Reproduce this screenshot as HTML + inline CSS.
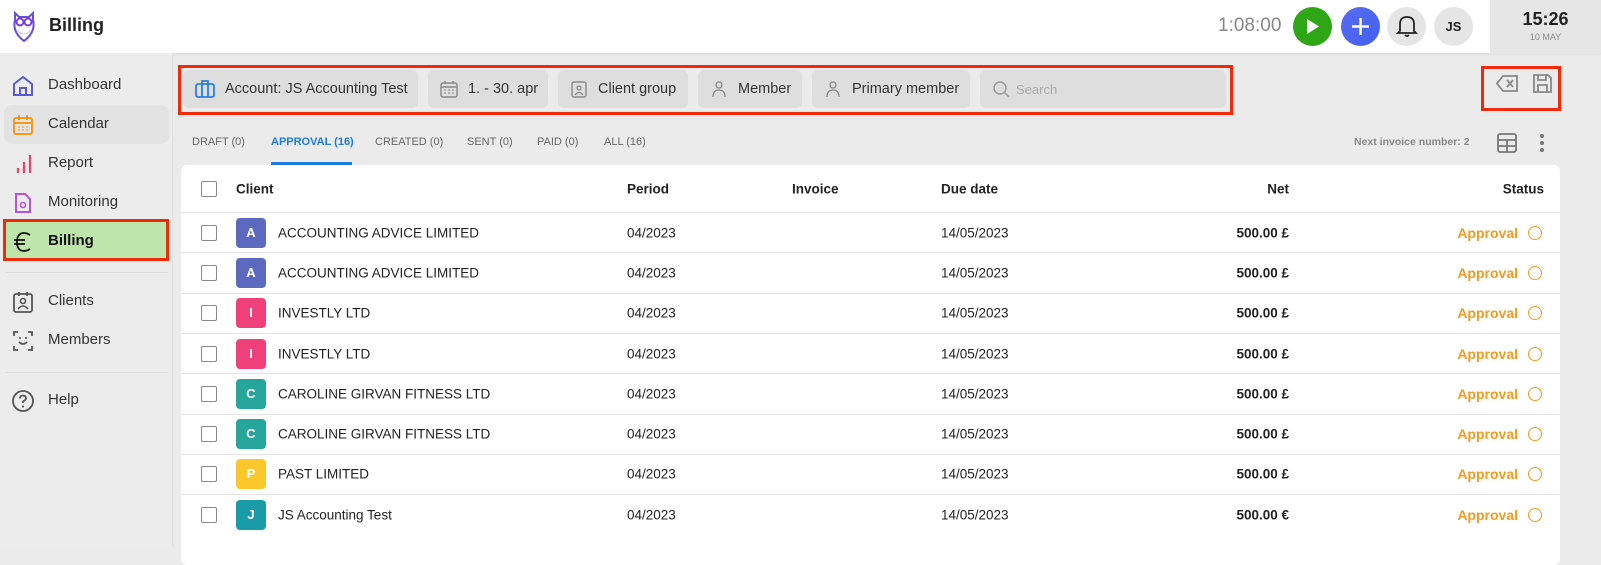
<!DOCTYPE html>
<html><head><meta charset="utf-8">
<style>
*{box-sizing:border-box;margin:0;padding:0}
body{width:1601px;height:546px;overflow:hidden;background:#ebebeb;font-family:"Liberation Sans",sans-serif;color:#222;position:relative}
.abs{position:absolute}
.top{left:0;top:0;width:1601px;height:53px;background:#fff;box-shadow:0 1px 3px rgba(0,0,0,.08)}
.side{left:0;top:53px;width:173px;height:493px;background:#ececec;border-right:1px solid #e0e0e0}
.nav{position:absolute;left:12px;font-size:15px;color:#333;display:flex;align-items:center}
.nav svg{position:absolute;left:0}
.nav span{position:absolute;left:36px;white-space:nowrap}
.chip{position:absolute;top:70px;height:38px;background:#dedede;border-radius:6px;font-size:14.5px;color:#333;display:flex;align-items:center;padding-left:12px;gap:10px;white-space:nowrap}
.tab{position:absolute;top:136px;font-size:11px;color:#666;white-space:nowrap}
.card{left:181px;top:165px;width:1379px;height:400px;background:#fff;border-radius:6px}
.row{position:absolute;left:0;width:1379px;height:40.3px;border-top:1px solid #e3e3e3;font-size:13.5px;color:#222}
.row>*{position:absolute;top:50%;transform:translateY(-50%);white-space:nowrap}
.cb{left:20px;width:16px;height:16px;border:1.5px solid #888;border-radius:2px}
.av{left:55px;width:30px;height:30px;border-radius:4px;color:#fff;font-weight:bold;font-size:13px;text-align:center;line-height:30px}
.hd{font-weight:bold;font-size:13.5px;color:#222}
</style></head><body>
<div class="abs top"></div>
<!-- logo -->
<svg class="abs" style="left:12px;top:10px" width="24" height="34" viewBox="0 0 24 34"><path d="M3 3 L7 7 L17 7 L21 3 L21 10 Q24 22 12 31 Q0 22 3 10Z" fill="none" stroke="#6a4fd8" stroke-width="2"/><circle cx="8" cy="12" r="3.5" fill="none" stroke="#7a3fd8" stroke-width="2"/><circle cx="16" cy="12" r="3.5" fill="none" stroke="#7a3fd8" stroke-width="2"/><path d="M5 20 Q12 28 19 20" stroke="#d0c4f0" fill="none"/></svg>
<div class="abs" style="left:49px;top:15px;font-size:18px;font-weight:bold;color:#222">Billing</div>
<div class="abs" style="left:1218px;top:15px;font-size:19px;color:#888">1:08:00</div>
<div class="abs" style="left:1293px;top:7px;width:39px;height:39px;border-radius:50%;background:#2fa616"></div>
<svg class="abs" style="left:1306px;top:19px" width="14" height="15"><path d="M1 0 L13 7.5 L1 15Z" fill="#fff"/></svg>
<div class="abs" style="left:1341px;top:7px;width:39px;height:39px;border-radius:50%;background:linear-gradient(135deg,#5a6cf0,#4060f0)"></div>
<svg class="abs" style="left:1350px;top:16px" width="21" height="21"><path d="M10.5 2v17M2 10.5h17" stroke="#fff" stroke-width="2.4"/></svg>
<div class="abs" style="left:1387px;top:7px;width:39px;height:39px;border-radius:50%;background:#e5e5e5"></div>
<svg class="abs" style="left:1396px;top:14px" width="22" height="24" viewBox="0 0 22 24"><path d="M4 17 V10 Q4 3 11 3 Q18 3 18 10 V17 L20 19 H2Z M9 21 Q11 23 13 21" fill="none" stroke="#222" stroke-width="1.8"/></svg>
<div class="abs" style="left:1434px;top:7px;width:39px;height:39px;border-radius:50%;background:#e5e5e5;font-size:13px;font-weight:bold;text-align:center;line-height:39px">JS</div>
<div class="abs" style="left:1490px;top:0;width:111px;height:54px;background:#e6e6e6"></div>
<div class="abs" style="left:1490px;top:9px;width:111px;text-align:center;font-size:18px;font-weight:bold;color:#222">15:26</div>
<div class="abs" style="left:1490px;top:32px;width:111px;text-align:center;font-size:9px;color:#888">10 MAY</div>

<div class="abs side"></div>
<div class="abs" style="left:4px;top:105px;width:165px;height:39px;background:#e3e3e3;border-radius:8px"></div>
<div class="nav" style="top:85px"><svg width="22" height="22" viewBox="0 0 22 22" style="top:-10px"><path d="M2 9 L11 2 L20 9 V20 H2Z M8 20 V13 H14 V20" fill="none" stroke="#5b5bd0" stroke-width="2"/></svg><span style="top:-9px">Dashboard</span></div>
<div class="nav" style="top:124px"><svg width="22" height="22" viewBox="0 0 22 22" style="top:-10px"><rect x="2" y="4" width="18" height="16" rx="2" fill="none" stroke="#f29a1f" stroke-width="2"/><path d="M2 9h18M7 1v5M15 1v5" stroke="#f29a1f" stroke-width="2"/><path d="M6 13h2M10 13h2M14 13h2M6 16h2M10 16h2M14 16h2" stroke="#f29a1f"/></svg><span style="top:-9px">Calendar</span></div>
<div class="nav" style="top:163px"><svg width="22" height="22" viewBox="0 0 22 22" style="top:-10px"><path d="M6 20v-5M12 20V9M18 20V2" stroke="#e8436a" stroke-width="2.2"/></svg><span style="top:-9px">Report</span></div>
<div class="nav" style="top:202px"><svg width="22" height="22" viewBox="0 0 22 22" style="top:-10px"><path d="M4 2H13L18 7V20H4Z" fill="none" stroke="#b455d6" stroke-width="2"/><circle cx="11" cy="13" r="2.5" fill="none" stroke="#b455d6" stroke-width="1.6"/></svg><span style="top:-9px">Monitoring</span></div>
<div class="abs" style="left:3px;top:219px;width:166px;height:42px;background:#bfe6aa;border:3px solid #f02a0a"></div>
<div class="nav" style="top:241px"><svg width="22" height="22" viewBox="0 0 22 22" style="top:-10px"><path d="M18 4 Q15 2 12 2 Q5 2 5 11 Q5 20 12 20 Q15 20 18 18 M2 9h11M2 13h11" fill="none" stroke="#111" stroke-width="1.8"/></svg><span style="top:-9px;font-weight:bold;color:#111">Billing</span></div>
<div class="abs" style="left:6px;top:272px;width:162px;height:1px;background:#ddd"></div>
<div class="nav" style="top:301px"><svg width="22" height="22" viewBox="0 0 22 22" style="top:-10px"><rect x="2" y="3" width="18" height="18" rx="2" fill="none" stroke="#555" stroke-width="1.8"/><path d="M7 1v4M15 1v4" stroke="#555" stroke-width="1.8"/><circle cx="11" cy="10" r="2.5" fill="none" stroke="#555" stroke-width="1.6"/><path d="M6 18 Q11 12 16 18" fill="none" stroke="#555" stroke-width="1.6"/></svg><span style="top:-9px">Clients</span></div>
<div class="nav" style="top:340px"><svg width="22" height="22" viewBox="0 0 22 22" style="top:-10px"><path d="M2 6V2H6M16 2h4v4M20 16v4h-4M6 20H2v-4" fill="none" stroke="#555" stroke-width="1.8"/><path d="M7 12 Q11 16 15 12" fill="none" stroke="#555" stroke-width="1.6"/><circle cx="8" cy="8" r="1" fill="#555"/><circle cx="14" cy="8" r="1" fill="#555"/></svg><span style="top:-9px">Members</span></div>
<div class="abs" style="left:6px;top:372px;width:162px;height:1px;background:#ddd"></div>
<div class="nav" style="top:400px"><svg width="24" height="24" viewBox="0 0 24 24" style="top:-11px;left:-1px"><circle cx="12" cy="12" r="10" fill="none" stroke="#555" stroke-width="1.8"/><path d="M9 9.5 Q9 6.5 12 6.5 Q15 6.5 15 9.3 Q15 11 12 12.5 V14" fill="none" stroke="#555" stroke-width="1.8"/><circle cx="12" cy="17.5" r="1.1" fill="#555"/></svg><span style="top:-9px">Help</span></div>

<!-- filters -->
<div class="abs" style="left:178px;top:65px;width:1055px;height:50px;border:3px solid #f02a0a"></div>
<div class="chip" style="left:183px;width:235px"><svg width="20" height="18" viewBox="0 0 20 18"><rect x="1" y="4" width="18" height="13" rx="2" fill="none" stroke="#2b7fe0" stroke-width="1.8"/><path d="M7 4V1h6v3M7 4v13M13 4v13" stroke="#2b7fe0" stroke-width="1.8" fill="none"/></svg>Account: JS Accounting Test</div>
<div class="chip" style="left:428px;width:120px"><svg width="18" height="18" viewBox="0 0 18 18"><rect x="1" y="3" width="16" height="14" rx="2" fill="none" stroke="#888" stroke-width="1.4"/><path d="M1 7h16M5 1v3M13 1v3" stroke="#888" stroke-width="1.4"/><path d="M4 10h2M8 10h2M12 10h2M4 13h2M8 13h2M12 13h2" stroke="#888"/></svg>1. - 30. apr</div>
<div class="chip" style="left:558px;width:130px"><svg width="18" height="18" viewBox="0 0 18 18"><rect x="2" y="2" width="14" height="15" rx="2" fill="none" stroke="#888" stroke-width="1.4"/><circle cx="9" cy="8" r="2" fill="none" stroke="#888" stroke-width="1.3"/><path d="M5 15 Q9 10 13 15" fill="none" stroke="#888" stroke-width="1.3"/></svg>Client group</div>
<div class="chip" style="left:698px;width:104px"><svg width="18" height="18" viewBox="0 0 18 18"><circle cx="9" cy="5" r="3" fill="none" stroke="#888" stroke-width="1.3"/><path d="M3 17 Q3 10 9 10 Q15 10 15 17" fill="none" stroke="#888" stroke-width="1.3"/></svg>Member</div>
<div class="chip" style="left:812px;width:158px"><svg width="18" height="18" viewBox="0 0 18 18"><circle cx="9" cy="5" r="3" fill="none" stroke="#888" stroke-width="1.3"/><path d="M3 17 Q3 10 9 10 Q15 10 15 17" fill="none" stroke="#888" stroke-width="1.3"/></svg>Primary member</div>
<div class="chip" style="left:980px;width:246px;color:#aaa;font-size:13px;gap:6px"><svg width="18" height="18" viewBox="0 0 18 18"><circle cx="8" cy="8" r="6" fill="none" stroke="#999" stroke-width="1.5"/><path d="M12.5 12.5L17 17" stroke="#999" stroke-width="1.5"/></svg>Search</div>
<div class="abs" style="left:1481px;top:66px;width:80px;height:45px;border:3px solid #f02a0a"></div>
<svg class="abs" style="left:1496px;top:75px" width="23" height="17" viewBox="0 0 23 17"><path d="M7 1H21V16H7L1 8.5Z" fill="none" stroke="#888" stroke-width="1.8"/><path d="M11 5l6 7M17 5l-6 7" stroke="#888" stroke-width="1.8"/></svg>
<svg class="abs" style="left:1532px;top:73px" width="21" height="21" viewBox="0 0 21 21"><path d="M2 2H16L19 5V19H2Z" fill="none" stroke="#888" stroke-width="1.8"/><path d="M6 2v5h8V2M6 19v-7h9v7" fill="none" stroke="#888" stroke-width="1.8"/></svg>

<!-- tabs -->
<div class="tab" style="left:192px">DRAFT (0)</div>
<div class="tab" style="left:271px;color:#1b7be0;font-weight:bold">APPROVAL (16)</div>
<div class="abs" style="left:271px;top:162px;width:81px;height:3px;background:#1b7be0"></div>
<div class="tab" style="left:375px">CREATED (0)</div>
<div class="tab" style="left:467px">SENT (0)</div>
<div class="tab" style="left:537px">PAID (0)</div>
<div class="tab" style="left:604px">ALL (16)</div>
<div class="tab" style="left:1354px;color:#888;font-weight:bold;font-size:10.5px">Next invoice number: 2</div>
<svg class="abs" style="left:1497px;top:133px" width="20" height="20" viewBox="0 0 20 20"><rect x="1" y="1" width="18" height="18" rx="2" fill="none" stroke="#777" stroke-width="1.8"/><path d="M1 7h18M1 13h18M10 7v12" stroke="#777" stroke-width="1.8"/></svg>
<svg class="abs" style="left:1539px;top:133px" width="6" height="20"><circle cx="3" cy="3" r="2" fill="#777"/><circle cx="3" cy="10" r="2" fill="#777"/><circle cx="3" cy="17" r="2" fill="#777"/></svg>

<!-- table -->
<div class="abs card">
 <div class="row" style="top:0;height:47px;border-top:none">
  <div class="cb"></div>
  <div class="hd" style="left:55px">Client</div>
  <div class="hd" style="left:446px">Period</div>
  <div class="hd" style="left:611px">Invoice</div>
  <div class="hd" style="left:760px">Due date</div>
  <div class="hd" style="right:271px">Net</div>
  <div class="hd" style="right:16px">Status</div>
 </div>
</div>
<div id="rows"></div>
<script>
var d=[["A","#5b6abf","ACCOUNTING ADVICE LIMITED","£"],["A","#5b6abf","ACCOUNTING ADVICE LIMITED","£"],["I","#f0407a","INVESTLY LTD","£"],["I","#f0407a","INVESTLY LTD","£"],["C","#26a69a","CAROLINE GIRVAN FITNESS LTD","£"],["C","#26a69a","CAROLINE GIRVAN FITNESS LTD","£"],["P","#fbc72a","PAST LIMITED","£"],["J","#1a9ba8","JS Accounting Test","€"]];
var c=document.querySelector('.card'),h='';
d.forEach(function(r,i){h+='<div class="row" style="top:'+(47+i*40.3)+'px"><div class="cb"></div><div class="av" style="background:'+r[1]+'">'+r[0]+'</div><div style="left:97px">'+r[2]+'</div><div style="left:446px">04/2023</div><div style="left:760px">14/05/2023</div><div style="right:271px;font-weight:bold">500.00 '+r[3]+'</div><div style="right:42px;color:#f49a1f;font-weight:bold;font-size:14px">Approval</div><div style="right:18px;width:14px;height:14px;border:1.5px solid #f49a1f;border-radius:50%"></div></div>';});
c.insertAdjacentHTML('beforeend',h);
</script>
</body></html>
